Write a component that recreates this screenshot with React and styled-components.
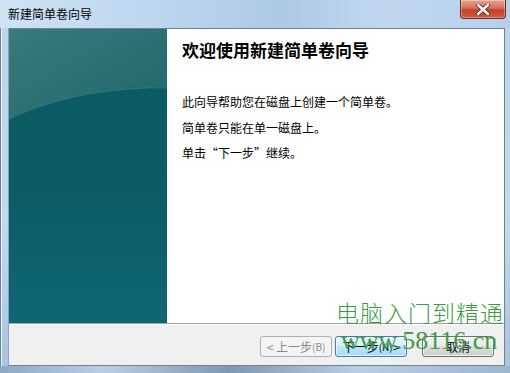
import React from 'react';
import styled, { createGlobalStyle } from 'styled-components';

const GlobalStyle = createGlobalStyle`
  html, body {
    margin: 0;
    padding: 0;
    background: #ffffff;
  }
  body {
    font-family: 'Noto Sans CJK SC', 'Liberation Sans', sans-serif;
    font-size: 12px;
  }
`;

const cjk = `'Noto Sans CJK SC', 'Liberation Sans', sans-serif`;

const Window = styled.div`
  position: relative;
  width: 510px;
  height: 373px;
  display: flex;
  flex-direction: column;
  overflow: hidden;
  background: linear-gradient(180deg, #d2e4f5 0%, #bcd4ec 8%, #c3d9ef 60%, #a9c3dd 100%);
  box-shadow: inset 1px 0 0 #6f8397, inset 2px 0 0 #e9f3fc;
`;

const TitleBar = styled.div`
  height: 28px;
  flex: none;
  display: flex;
  justify-content: space-between;
  align-items: flex-start;
  background: linear-gradient(90deg, #cfe2f5 0%, #bdd6ee 30%, #aec9e4 55%, #c0d7ee 75%, #b7d0ea 100%);
`;

const Title = styled.div`
  font-family: ${cjk};
  font-size: 12px;
  line-height: 16px;
  color: #000;
  padding: 6px 0 0 8px;
`;

const CloseButton = styled.div`
  width: 44px;
  height: 18px;
  margin-right: 4px;
  border: 1px solid #6b2a20;
  border-top: none;
  border-radius: 0 0 4px 4px;
  background: linear-gradient(180deg, #e8a493 0%, #d4715c 45%, #c4402a 55%, #cd5a3d 100%);
  box-shadow: inset 0 0 0 1px rgba(255, 255, 255, 0.35);
  display: flex;
  align-items: center;
  justify-content: center;
`;

const Client = styled.div`
  flex: 1;
  margin: 0 5px 0 8px;
  display: flex;
  flex-direction: column;
  border: 1px solid #6f8193;
  border-left-color: #8ea3b7;
  background: #f0f0f0;
`;

const Main = styled.div`
  flex: 1;
  display: flex;
  min-height: 0;
`;

const SidePanel = styled.div`
  width: 158px;
  flex: none;
  background: linear-gradient(180deg, #0b5a62 0%, #0c5d66 60%, #0f6676 100%);
  position: relative;
  overflow: hidden;
`;

const SideArt = styled.svg`
  display: block;
  width: 158px;
  height: 100%;
`;

const ContentPane = styled.div`
  flex: 1;
  background: #ffffff;
  padding: 11px 16px 0 15px;
`;

const Heading = styled.h1`
  margin: 0;
  font-family: ${cjk};
  font-size: 17px;
  line-height: 20px;
  font-weight: 700;
  color: #000;
`;

const Body = styled.div`
  margin-top: 29px;
  display: flex;
  flex-direction: column;
`;

const Line = styled.p`
  margin: 0;
  font-family: ${cjk};
  font-size: 12px;
  line-height: 25.5px;
  color: #000;
`;

const Separator = styled.div`
  height: 1px;
  flex: none;
  background: #a0a0a0;
  box-shadow: 0 1px 0 #ffffff;
`;

const Footer = styled.div`
  height: 41px;
  flex: none;
  display: flex;
  justify-content: flex-end;
  align-items: flex-start;
  padding: 12px 10px 0 0;
  box-sizing: border-box;
`;

const Button = styled.div`
  width: 72px;
  height: 21px;
  box-sizing: border-box;
  margin-left: ${p => p.$gap}px;
  border-radius: 3px;
  display: flex;
  align-items: center;
  justify-content: center;
  font-family: ${cjk};
  font-size: 12px;
  color: ${p => (p.$disabled ? '#8a8a8a' : '#000')};
  border: 1px solid ${p => (p.$disabled ? '#adb2b5' : p.$focus ? '#3c7fb1' : '#707070')};
  background: ${p =>
    p.$disabled
      ? '#f4f4f4'
      : p.$focus
      ? 'linear-gradient(180deg, #eaf6fd 0%, #d9f0fc 45%, #bee6fd 50%, #a7d9f5 100%)'
      : 'linear-gradient(180deg, #f2f2f2 0%, #ebebeb 45%, #dddddd 50%, #cfcfcf 100%)'};
  box-shadow: ${p => (p.$disabled ? 'none' : 'inset 0 0 0 1px rgba(255,255,255,0.7)')};
`;

const Small = styled.span`
  font-size: 10px;
`;

const BottomFrame = styled.div`
  height: 7px;
  flex: none;
  background: linear-gradient(90deg, #8ea8c2 0%, #b9cfe6 20%, #7f97ae 45%, #b9cfe6 70%, #9db5cd 100%);
`;

const Watermark = styled.div`
  position: absolute;
  left: 336px;
  top: 297px;
  display: flex;
  flex-direction: column;
  align-items: flex-start;
  color: #3d9b47;
  pointer-events: none;
`;

const WatermarkTitle = styled.div`
  font-family: 'Noto Sans CJK SC', serif;
  font-size: 23px;
  line-height: 30px;
  letter-spacing: 1px;
  font-weight: 300;
`;

const WatermarkUrl = styled.div`
  font-family: 'Liberation Serif', serif;
  font-size: 26px;
  line-height: 28px;
  margin-left: 5px;
`;

function CloseGlyph() {
  return (
    <svg width="14" height="11" viewBox="0 0 14 11">
      <path d="M2 1 L12 10 M12 1 L2 10" stroke="#5a1a10" strokeWidth="4" strokeLinecap="round" />
      <path d="M2 1 L12 10 M12 1 L2 10" stroke="#ffffff" strokeWidth="2.4" strokeLinecap="round" />
    </svg>
  );
}

export default function App() {
  return (
    <>
      <GlobalStyle />
      <Window>
        <TitleBar>
          <Title>新建简单卷向导</Title>
          <CloseButton>
            <CloseGlyph />
          </CloseButton>
        </TitleBar>
        <Client>
          <Main>
            <SidePanel>
              <SideArt viewBox="0 0 158 294" preserveAspectRatio="none">
                <defs>
                  <linearGradient id="upper" x1="0" y1="0" x2="1" y2="1">
                    <stop offset="0" stopColor="#3a7b7c" />
                    <stop offset="1" stopColor="#1f6669" />
                  </linearGradient>
                </defs>
                <path d="M0 0 H158 V59 C110 58 50 66 0 90 Z" fill="url(#upper)" />
                <path d="M0 90 C50 66 110 58 158 59" fill="none" stroke="#3f8486" strokeOpacity="0.5" />
              </SideArt>
            </SidePanel>
            <ContentPane>
              <Heading>欢迎使用新建简单卷向导</Heading>
              <Body>
                <Line>此向导帮助您在磁盘上创建一个简单卷。</Line>
                <Line>简单卷只能在单一磁盘上。</Line>
                <Line>单击“下一步”继续。</Line>
              </Body>
            </ContentPane>
          </Main>
          <Separator />
          <Footer>
            <Button $disabled $gap={0}>
              &lt; 上一步<Small>(B)</Small>
            </Button>
            <Button $focus $gap={3}>
              下一步<Small>(N)</Small> &gt;
            </Button>
            <Button $gap={15}>取消</Button>
          </Footer>
        </Client>
        <BottomFrame />
        <Watermark>
          <WatermarkTitle>电脑入门到精通</WatermarkTitle>
          <WatermarkUrl>www.58116.cn</WatermarkUrl>
        </Watermark>
      </Window>
    </>
  );
}
